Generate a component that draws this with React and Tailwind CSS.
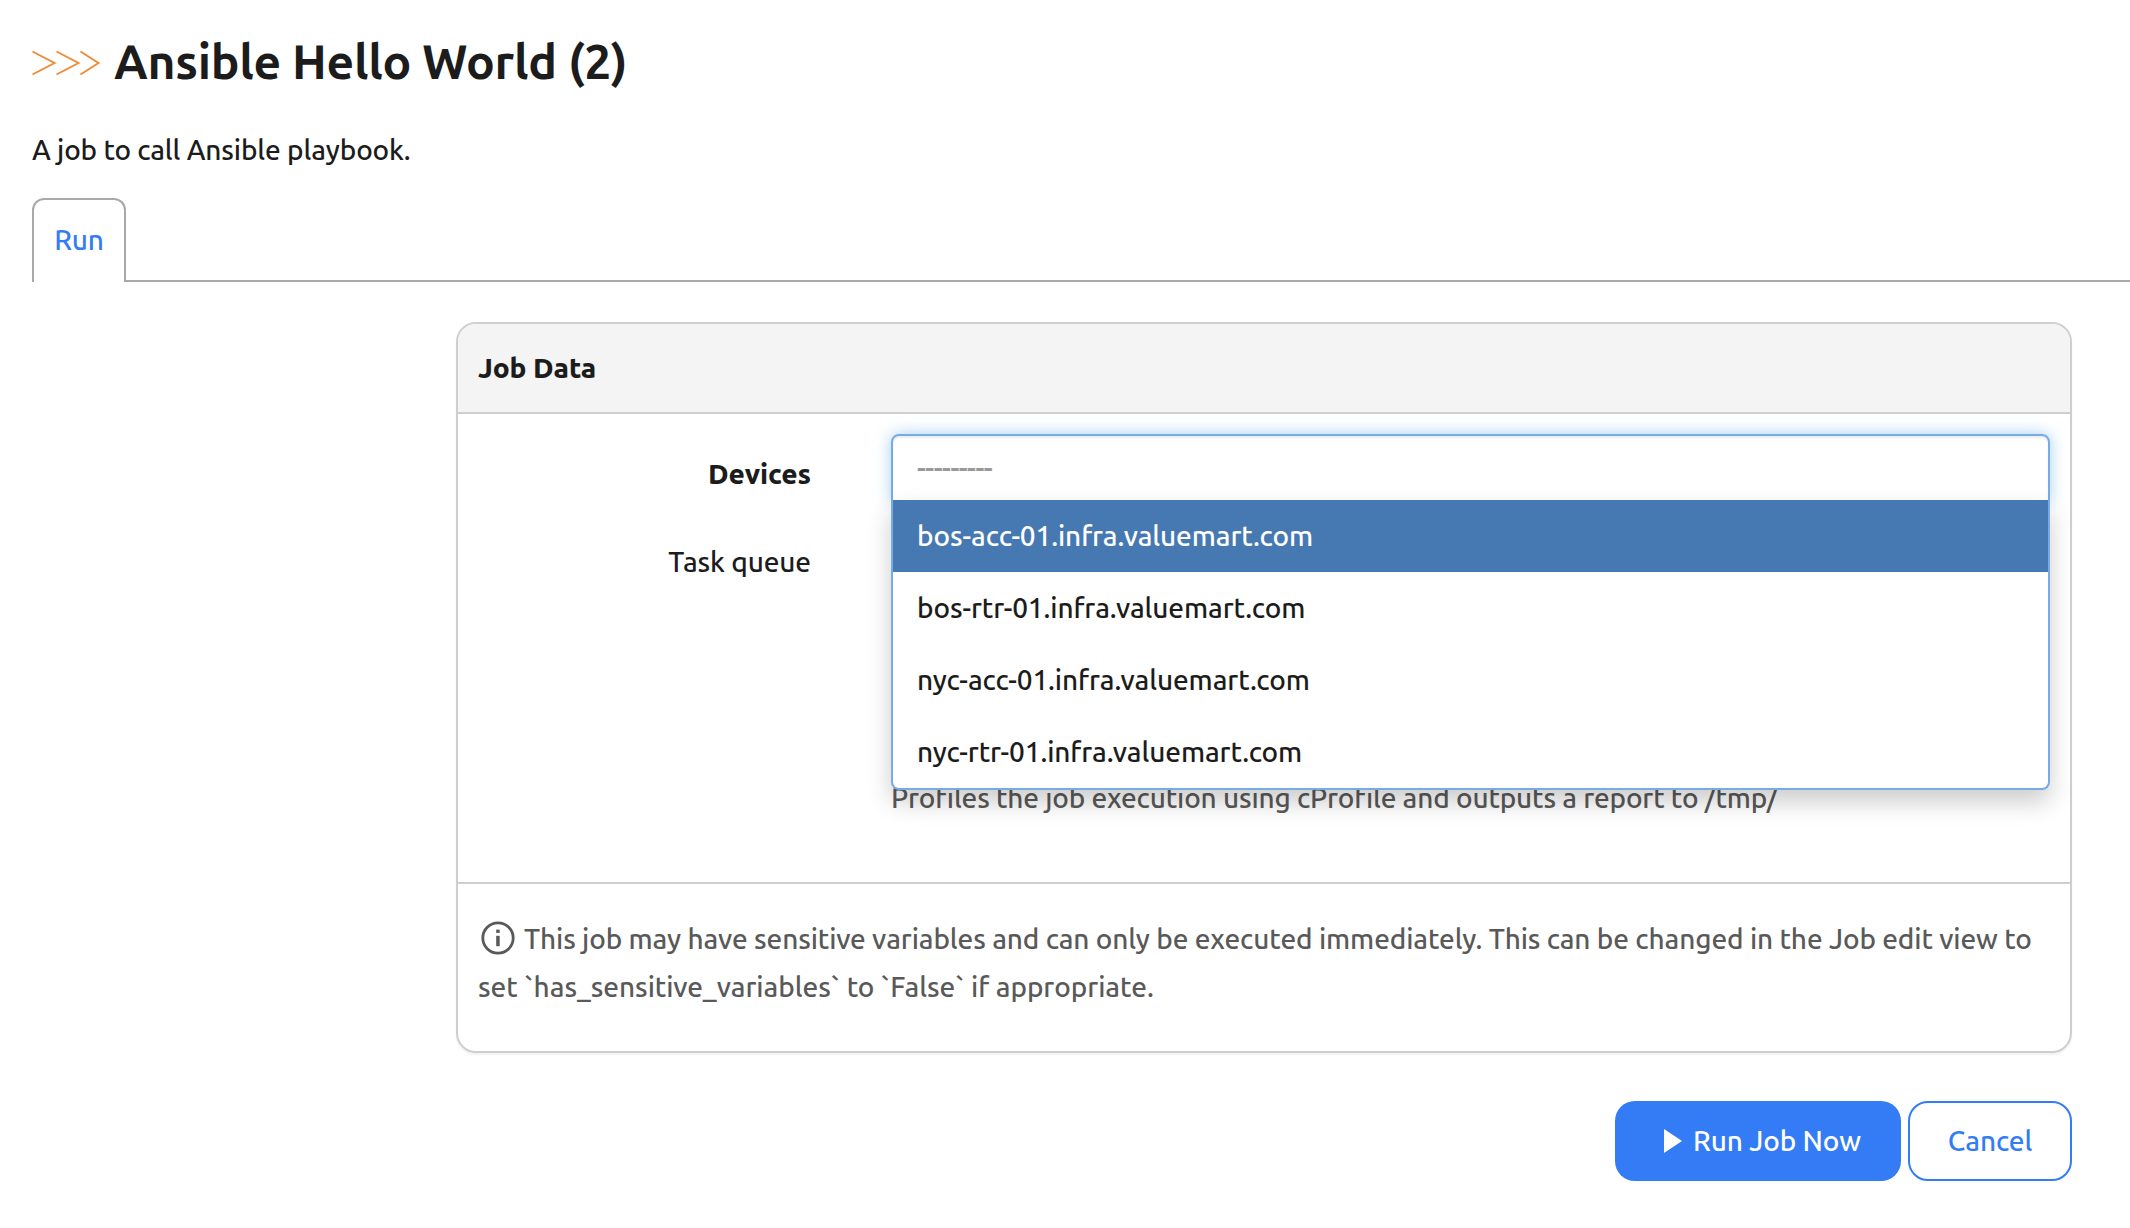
const options = [
  'bos-acc-01.infra.valuemart.com',
  'bos-rtr-01.infra.valuemart.com',
  'nyc-acc-01.infra.valuemart.com',
  'nyc-rtr-01.infra.valuemart.com',
];

function Chevrons() {
  return (
    <svg width="70" height="26" viewBox="0 0 70 26" fill="none" stroke="#f08b33" strokeWidth="1.9" className="shrink-0">
      <path d="M0.5 1.5 L22.5 13 L0.5 24.5" />
      <path d="M24.5 1.5 L46.5 13 L24.5 24.5" />
      <path d="M48.5 1.5 L66.5 13 L48.5 24.5" />
    </svg>
  );
}

function InfoIcon() {
  return (
    <svg width="34" height="34" viewBox="0 0 34 34" className="mr-[9px] ml-[3px] inline-block align-[-6px]">
      <circle cx="17" cy="17" r="15.2" fill="none" stroke="#595959" strokeWidth="2.8" />
      <rect x="15.2" y="8.6" width="3.5" height="3.3" fill="#595959" />
      <rect x="15.2" y="14.8" width="3.5" height="10.4" fill="#595959" />
    </svg>
  );
}

function DeviceSelect() {
  return (
    <div className="relative h-[68px] w-[1159px] rounded-t-lg border-2 border-[#76abe6] bg-white px-6 pt-[11px] text-[#999] shadow-[inset_0_2px_2px_rgba(0,0,0,0.075),0_0_16px_rgba(102,175,233,0.6)]">
      <span className="block leading-[44px] font-semibold tracking-[-0.5px]">---------</span>
      <ul className="absolute top-16 -left-0.5 w-[1159px] overflow-hidden rounded-b-lg border-2 border-t-0 border-[#76abe6] bg-white shadow-[0_12px_24px_rgba(0,0,0,0.2)]">
        {options.map((name, i) => (
          <li
            key={name}
            className={
              i === 0
                ? 'h-[72px] bg-[#4679b2] px-6 leading-[74px] text-white'
                : 'h-[72px] px-6 leading-[74px] text-[#1c1c1c]'
            }
          >
            {name}
          </li>
        ))}
      </ul>
    </div>
  );
}

export default function App() {
  return (
    <div className="h-[1228px] w-[2130px] overflow-hidden bg-white font-['Ubuntu_Sans',Ubuntu,'Noto_Sans',sans-serif] text-[28px] leading-[48px] font-[460] tracking-[-0.11px] text-[#1c1c1c]">
      <header className="flex h-[126px] items-center gap-3 px-8">
        <Chevrons />
        <h1 className="text-[48px] leading-[60px] font-bold tracking-[-0.26px]">Ansible Hello World (2)</h1>
      </header>
      <p className="h-[72px] px-8 pt-px tracking-[-0.14px]">A job to call Ansible playbook.</p>

      <nav className="flex h-[84px] items-stretch">
        <div className="w-8 border-b-2 border-transparent" />
        <a className="flex w-[94px] justify-center rounded-t-xl border-2 border-b-0 border-[#a9a9a9] pt-[17px] text-[#347bf6]">Run</a>
        <div className="flex-1 border-b-2 border-[#a9a9a9]" />
      </nav>

      <main className="mt-10 ml-[456px] w-[1616px]">
        <section className="rounded-[20px] border-2 border-[#cfcfcf] shadow-[0_2px_2px_rgba(0,0,0,0.05)]">
          <h2 className="h-[90px] rounded-t-[18px] border-b-2 border-[#cfcfcf] bg-[#f4f4f4] px-5 pt-[21px] font-extrabold">Job Data</h2>
          <div className="grid h-[468px] grid-cols-[353px_1fr] grid-rows-[88px_253px_48px] gap-x-20 pt-5">
            <label className="pt-[17px] text-right font-extrabold">Devices</label>
            <div className="relative z-10">
              <DeviceSelect />
            </div>
            <label className="pt-[17px] text-right">Task queue</label>
            <div />
            <div />
            <p className="tracking-[-0.16px] text-[#595959]">Profiles the job execution using cProfile and outputs a report to /tmp/</p>
          </div>
          <p className="h-[169px] border-t-2 border-[#cfcfcf] px-5 pt-[32px] text-[#595959]">
            <InfoIcon />
            This job may have sensitive variables and can only be executed immediately. This can be changed in the Job edit view to{' '}
            <span className="tracking-[-0.06px]">set `has_sensitive_variables` to `False` if appropriate.</span>
          </p>
        </section>
        <div className="mt-12 flex justify-end gap-[7px]">
          <button className="flex h-20 w-[286px] items-center justify-center gap-[11px] rounded-[20px] bg-[#347bf6] pl-[9px] text-white">
            <svg width="18" height="24" viewBox="0 0 18 24" fill="currentColor"><path d="M0 0 L18 12 L0 24 Z" /></svg>
            <span className="pt-0.5">Run Job Now</span>
          </button>
          <button className="h-20 w-[164px] rounded-[20px] border-2 border-[#347bf6] pt-0.5 text-[#347bf6]">Cancel</button>
        </div>
      </main>
    </div>
  );
}
